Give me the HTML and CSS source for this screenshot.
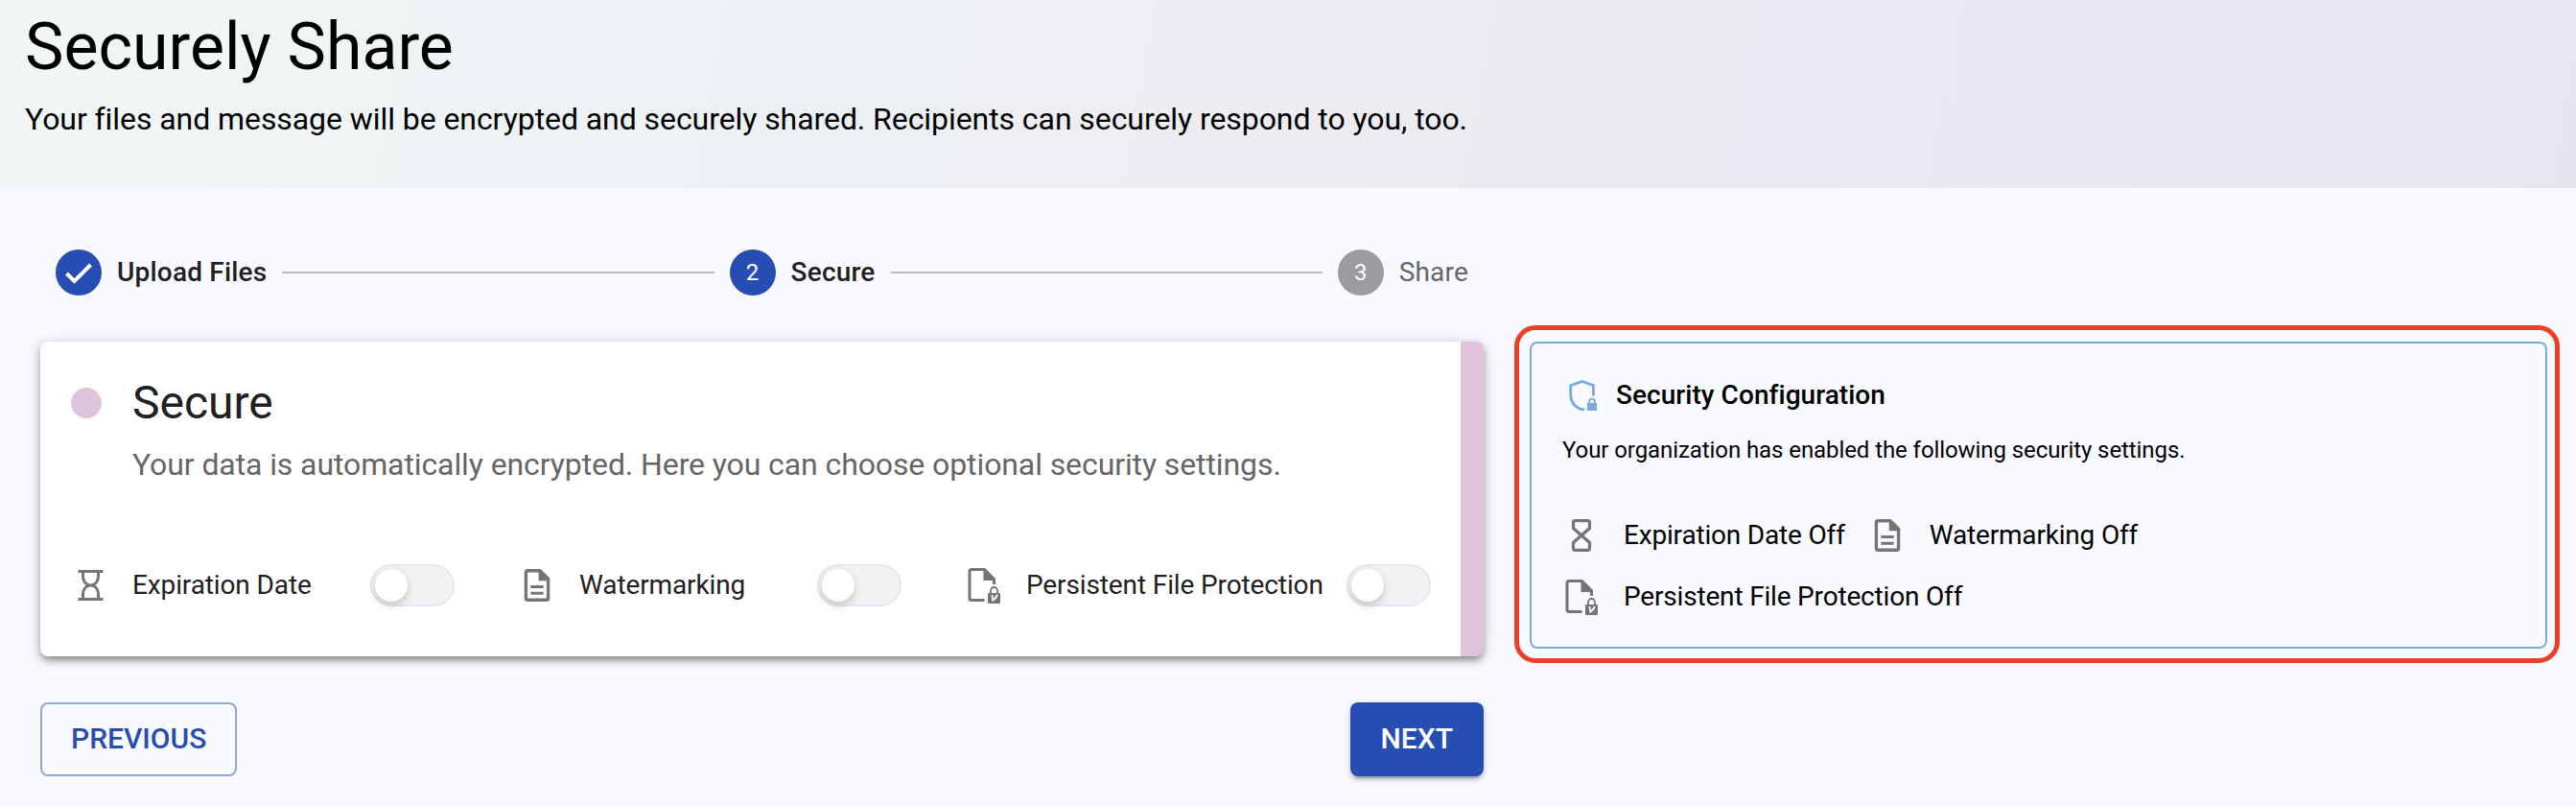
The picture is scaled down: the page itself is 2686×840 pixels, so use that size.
FILE: index.html
```html
<!DOCTYPE html>
<html lang="en">
<head>
  <meta charset="UTF-8" />
  <meta name="viewport" content="width=device-width, initial-scale=1.0" />
  <title>Securely Share</title>
  <link rel="stylesheet" href="styles.css">
</head>
<body>
  <!-- shared icons -->
  <svg class="icon-defs" width="0" height="0">
    <symbol id="icon-hourglass-open" viewBox="0 0 40 40">
      <path d="M7.500 5.500h26M7.500 34.500h26M12.500 5.500v5.500c0 5 3.500 9 8 9s8-4 8-9V5.500M12.500 34.500V29c0-5 3.500-9 8-9s8 4 8 9v5.500" fill="none" stroke="currentColor" stroke-width="3" />
    </symbol>
    <symbol id="icon-hourglass" viewBox="0 0 40 40">
      <path fill="none" stroke="currentColor" stroke-width="3.200" stroke-linejoin="round" d="M13.500 4.700h13a2 2 0 0 1 2 2V12.500L20 20l-8.500-7.500V6.700a2 2 0 0 1 2-2zM13.500 35.300h13a2 2 0 0 0 2-2V27.500L20 20l-8.500 7.500v5.800a2 2 0 0 0 2 2z" />
    </symbol>
    <symbol id="icon-doc" viewBox="0 0 40 40">
      <path fill="none" stroke="currentColor" stroke-width="3.400" stroke-linejoin="round" d="M23 4.700H10.200A1.800 1.800 0 0 0 8.400 6.500v27a1.800 1.800 0 0 0 1.800 1.800h19.600a1.800 1.800 0 0 0 1.800-1.800V13.300z" />
      <path fill="currentColor" d="M21.700 4v11.300h10.800zM13.300 20h13.400v3H13.300zM13.300 26.700h13.400v3H13.300z" />
    </symbol>
    <symbol id="icon-doc-lock" viewBox="0 0 40 40">
      <path fill="none" stroke="currentColor" stroke-width="3" d="M20.500 35.500H7A2 2 0 0 1 5 33.500V5.500A2 2 0 0 1 7 3.500H20.500L30.500 13.500V19" />
      <path fill="currentColor" d="M19.500 2.500v12.500H32z" />
      <path fill="none" stroke="currentColor" stroke-width="1.800" d="M27 29v-3.500a3.500 3.500 0 0 1 7 0V29" />
      <rect fill="currentColor" x="24" y="28" width="13" height="11" rx="1" />
      <path class="icon-cut" d="M27.500 30l2 .3.200 4 3.800-5 1.200.7c-1 3.500-3.200 5.700-6 7z" />
    </symbol>
    <symbol id="icon-shield-lock" viewBox="0 0 40 40">
      <path fill="none" stroke="currentColor" stroke-width="2.800" d="M23 34l-2.500 1C12 32 8.700 26.500 8.700 19V9.800L20.800 5.400l11.600 4.400V20.500" />
      <path fill="none" stroke="currentColor" stroke-width="1.800" d="M28.200 29v-2.500a2.800 2.800 0 0 1 5.600 0V29" />
      <rect fill="currentColor" x="26" y="28" width="10" height="8" rx=".8" />
    </symbol>
  </svg>

  <header class="page-header">
    <h1>Securely Share</h1>
    <p>Your files and message will be encrypted and securely shared. Recipients can securely respond to you, too.</p>
  </header>

  <main class="content">
    <section class="wizard">
      <div class="stepper">
        <div class="step">
          <span class="step-icon">
            <svg width="30" height="30" viewBox="0 0 30 30"><path d="M2.500 16l8 8L27.500 7" fill="none" stroke="#fff" stroke-width="4" /></svg>
          </span>
          <span class="step-label">Upload Files</span>
        </div>
        <div class="step-line"></div>
        <div class="step">
          <span class="step-icon">2</span>
          <span class="step-label">Secure</span>
        </div>
        <div class="step-line"></div>
        <div class="step disabled">
          <span class="step-icon">3</span>
          <span class="step-label">Share</span>
        </div>
      </div>

      <div class="card">
        <div class="card-title">
          <span class="dot"></span>
          <h2>Secure</h2>
        </div>
        <p class="card-text">Your data is automatically encrypted. Here you can choose optional security settings.</p>
        <div class="options">
          <div class="option">
            <svg class="icon"><use href="#icon-hourglass-open" /></svg>
            <span class="option-label">Expiration Date</span>
            <span class="toggle"></span>
          </div>
          <div class="option">
            <svg class="icon"><use href="#icon-doc" /></svg>
            <span class="option-label">Watermarking</span>
            <span class="toggle"></span>
          </div>
          <div class="option">
            <svg class="icon"><use href="#icon-doc-lock" /></svg>
            <span class="option-label">Persistent File Protection</span>
            <span class="toggle"></span>
          </div>
        </div>
      </div>

      <div class="actions">
        <button class="btn btn-outlined" type="button">PREVIOUS</button>
        <button class="btn btn-primary" type="button">NEXT</button>
      </div>
    </section>

    <aside class="highlight">
      <div class="config">
        <div class="config-title">
          <svg class="icon"><use href="#icon-shield-lock" /></svg>
          <h3>Security Configuration</h3>
        </div>
        <p>Your organization has enabled the following security settings.</p>
        <ul class="settings">
          <li><svg class="icon"><use href="#icon-hourglass" /></svg><span>Expiration Date Off</span></li>
          <li><svg class="icon"><use href="#icon-doc" /></svg><span>Watermarking Off</span></li>
          <li><svg class="icon"><use href="#icon-doc-lock" /></svg><span>Persistent File Protection Off</span></li>
        </ul>
      </div>
    </aside>
  </main>
</body>
</html>
```
FILE: styles.css
```css
* {
  box-sizing: border-box;
}
body {
  margin: 0;
  height: 840px;
  overflow: hidden;
  background: #f9faff;
  color: #000;
  font-family: Roboto, sans-serif;
  font-size: 28px;
}
h1, h2, h3, p, ul {
  margin: 0;
  padding: 0;
  font-weight: 400;
}
.icon-defs {
  display: block;
}
.icon {
  width: 40px;
  height: 40px;
  flex: none;
  color: #757575;
}
.icon-cut {
  fill: #fff;
}

.page-header {
  height: 196px;
  padding: 8px 26px 0;
  background: linear-gradient(100deg, #f2f7f6, #ecf0f4 36%, #eeeef3 40%, #ebebef 62%, #e9e9f3 70%, #e7e5f0);
}
.page-header h1 {
  font-size: 68px;
  line-height: 82px;
}
.page-header p {
  margin-top: 10px;
  font-size: 32px;
  line-height: 48px;
  letter-spacing: -0.07px;
}

.content {
  display: flex;
  align-items: flex-start;
  padding-left: 42px;
}
.wizard {
  width: 1505px;
}

/* stepper */
.stepper {
  display: flex;
  align-items: center;
  height: 160px;
  padding: 16px 16px 0;
}
.step {
  display: flex;
  align-items: center;
  color: #212121;
}
.step-icon {
  display: flex;
  align-items: center;
  justify-content: center;
  width: 48px;
  height: 48px;
  border-radius: 50%;
  background: #264db1;
  color: #fff;
  font-size: 24px;
}
.step-label {
  margin: 0 0 2px 16px;
  font-weight: 500;
  letter-spacing: 0.00714em;
}
.step-line {
  flex: 1;
  height: 2px;
  margin: 0 16px;
  background: #bdbdbd;
}
.step.disabled .step-icon {
  background: #9b9ca0;
}
.step.disabled .step-label {
  color: #666;
  font-weight: 400;
}

/* main card */
.card {
  height: 328px;
  padding: 32px 0 0 32px;
  border-right: 24px solid #dfc5dc;
  border-radius: 8px;
  background: #fff;
  box-shadow: 0 6px 6px -4px rgba(0,0,0,0.2), 0 4px 8px rgba(0,0,0,0.3), 0 2px 20px rgba(0,0,0,0.12);
}
.card-title {
  display: flex;
  align-items: center;
  height: 64px;
}
.dot {
  width: 32px;
  height: 32px;
  margin-right: 32px;
  border-radius: 50%;
  background: #dfc5dc;
}
.card-title h2 {
  margin-bottom: 2px;
  color: #212121;
  font-size: 48px;
}
.card-text {
  margin: 8px 0 0 64px;
  color: #666;
  font-size: 32px;
  line-height: 48px;
  letter-spacing: -0.1px;
}
.options {
  display: flex;
  margin-top: 70px;
}
.option {
  display: flex;
  align-items: center;
  flex: none;
  width: 466px;
  height: 64px;
}
.option-label {
  flex: none;
  min-width: 224px;
  margin: 0 24px 2px;
  color: #212121;
  white-space: nowrap;
  letter-spacing: -0.12px;
}
.toggle {
  flex: none;
  width: 88px;
  height: 44px;
  padding: 3px;
  border: 2px solid #e4e8f6;
  border-radius: 22px;
  background: #f2f2f2;
}
.toggle::before {
  content: "";
  display: block;
  width: 34px;
  height: 34px;
  border-radius: 50%;
  background: #fff;
  box-shadow: 0 4px 8px rgba(0,35,11,0.2);
}

/* buttons */
.actions {
  display: flex;
  justify-content: space-between;
  margin-top: 48px;
}
.btn {
  height: 77px;
  padding: 0 32px 2px;
  border: none;
  border-radius: 8px;
  font-family: inherit;
  font-size: 30px;
  font-weight: 500;
}
.btn-outlined {
  padding: 0 30px 2px;
  border: 2px solid #92a6d8;
  background: transparent;
  color: #264db1;
}
.btn-primary {
  background: #264db1;
  color: #fff;
  box-shadow: 0 6px 2px -4px rgba(0,0,0,0.2), 0 4px 4px rgba(0,0,0,0.14), 0 2px 10px rgba(0,0,0,0.12);
}

/* security configuration */
.highlight {
  width: 1090px;
  height: 352px;
  margin: 143px 0 0 32px;
  padding: 12px 8px 0 11px;
  border: 5px solid #ea4025;
  border-radius: 22px;
}
.config {
  height: 320px;
  padding: 32px 32px 0;
  border: 2px solid #7aa9de;
  border-radius: 8px;
}
.config .icon-cut {
  fill: #f9faff;
}
.config-title {
  display: flex;
  align-items: center;
  height: 44px;
}
.config-title .icon {
  color: #7aa9de;
}
.config-title h3 {
  margin: 0 0 2px 16px;
  font-size: 28px;
  font-weight: 500;
  letter-spacing: 0.05px;
}
.config p {
  margin-top: 18px;
  font-size: 24px;
  line-height: 34px;
  letter-spacing: -0.08px;
}
.settings {
  display: flex;
  flex-wrap: wrap;
  width: 800px;
  margin-top: 40px;
  list-style: none;
}
.settings li {
  display: flex;
  align-items: center;
  height: 64px;
  margin-right: 24px;
  letter-spacing: -0.18px;
}
.settings span {
  margin: 0 0 2px 24px;
}
```
